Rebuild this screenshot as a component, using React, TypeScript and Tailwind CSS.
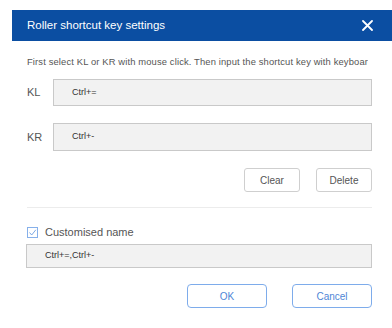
export default function App() {
  return (
    <div
      className="h-[328px] w-[392px] overflow-hidden bg-white pl-[12px] pt-[10px] text-[#444]"
      style={{ fontFamily: '"Liberation Sans", Arial, sans-serif' }}
    >
      {/* header */}
      <div className="flex h-[31px] items-center justify-between bg-[#0b4ea2] pl-[15px] pr-[19px]">
        <span className="text-[11.5px] text-white">Roller shortcut key settings</span>
        <svg width="11" height="11" viewBox="0 0 11 11" aria-hidden="true">
          <path d="M1 1 10 10M10 1 1 10" stroke="#fff" strokeWidth="1.8" strokeLinecap="round" />
        </svg>
      </div>

      <div className="pl-[15px] pr-[20px]">
        <div className="mt-[15px] w-[341px] overflow-hidden">
          <p className="whitespace-nowrap text-[9.4px] leading-[12px] tracking-[0.14px] text-[#555]">
            First select KL or KR with mouse click. Then input the shortcut key with keyboard
          </p>
        </div>

        <div className="mt-[11px] flex items-center">
          <span className="w-[26px] text-[11px] text-[#555]">KL</span>
          <div className="flex h-[27px] flex-1 items-center border border-[#c9c9c9] bg-[#f2f2f2] pl-[18px] text-[9px] text-[#333]">
            Ctrl+=
          </div>
        </div>

        <div className="mt-[17px] flex items-center">
          <span className="w-[26px] text-[11px] text-[#555]">KR</span>
          <div className="flex h-[28px] flex-1 items-center border border-[#c9c9c9] bg-[#f2f2f2] pl-[18px] text-[9px] text-[#333]">
            Ctrl+-
          </div>
        </div>

        <div className="mt-[17px] flex justify-end gap-[16px]">
          <button className="h-[24px] w-[56px] rounded-[3px] border border-[#cfcfcf] bg-white text-[10px] text-[#555]">
            Clear
          </button>
          <button className="h-[24px] w-[56px] rounded-[3px] border border-[#cfcfcf] bg-white text-[10px] text-[#555]">
            Delete
          </button>
        </div>

        <div className="mt-[15px] h-px bg-[#ececec]" />

        <div className="mt-[18px] flex h-[12px] items-center gap-[7px]">
          <span className="flex h-[11px] w-[11px] items-center justify-center border border-[#86b0ea]">
            <svg width="9" height="9" viewBox="0 0 9 9" aria-hidden="true">
              <path d="M1.5 4.5 3.7 7 7.8 1.8" fill="none" stroke="#6f9fe0" strokeWidth="0.9" />
            </svg>
          </span>
          <span className="text-[11px] leading-[12px] text-[#555]">Customised name</span>
        </div>

        <div className="mt-[6px] -ml-px flex h-[24px] items-center border border-[#c9c9c9] bg-[#f2f2f2] pl-[18px] text-[9px] text-[#333]">
          Ctrl+=,Ctrl+-
        </div>

        <div className="mt-[16px] flex justify-end gap-[25px]">
          <button className="h-[24px] w-[80px] rounded-[4px] border border-[#7eaceb] bg-white text-[10px] text-[#4f86d6]">
            OK
          </button>
          <button className="h-[24px] w-[80px] rounded-[4px] border border-[#7eaceb] bg-white text-[10px] text-[#4f86d6]">
            Cancel
          </button>
        </div>
      </div>
    </div>
  );
}
